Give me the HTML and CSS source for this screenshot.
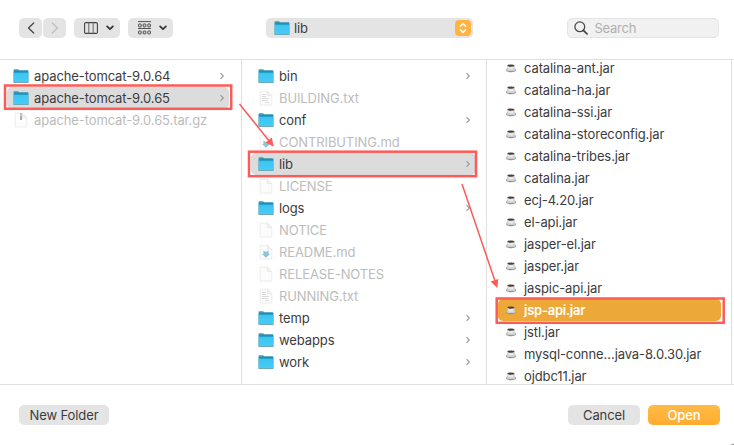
FILE: index.html
```html
<!DOCTYPE html>
<html lang="en">
<head>
<meta charset="utf-8">
<title>Open</title>
<link rel="stylesheet" href="styles.css">
</head>
<body>
<svg class="defs" aria-hidden="true">
  <defs>
    <linearGradient id="blue" x1="0" y1="0" x2="0" y2="1"><stop offset="0" stop-color="#3fc3ee"/><stop offset="1" stop-color="#43cdf9"/></linearGradient>
  </defs>
  <symbol id="folder" viewBox="0 0 16 16">
    <path d="M.5 2.2Q.5 1.2 1.5 1.2H5l1.3 1h8.2q1 0 1 1V14.5H.5z" fill="#4b98ae"/>
    <path d="M1 2.8H15V5.5H1z" fill="#1593c4"/>
    <path d="M.7 4.7H15.3V14.2H.7z" fill="url(#blue)"/>
    <path d="M.6 14.5H15.4" stroke="#6aa5b5" stroke-width=".9"/>
  </symbol>
  <symbol id="page" viewBox="0 0 16 16">
    <path d="M2.2 1.2H9.3L13.8 5.6V15H2.2z" fill="#fcfcfc" stroke="#e9e9e9" stroke-width=".8"/>
    <path d="M9.3 1.2V5.6H13.8z" fill="#f3f3f3" stroke="#e2e2e2" stroke-width=".7"/>
  </symbol>
  <symbol id="text" viewBox="0 0 16 16">
    <use href="#page"/>
    <path d="M4 4.5H8M4 6.5H8M4 8.5H11M4 10.5H10M7 12.5H11" stroke="#d2d2d2" stroke-width=".8"/>
  </symbol>
  <symbol id="markdown" viewBox="0 0 16 16">
    <use href="#page"/>
    <path d="M5.4 6.5 8 8l2.6-1.5V10H12l-4 3.7L4 10h1.4z" fill="#8ec5d5"/>
  </symbol>
  <symbol id="archive" viewBox="0 0 16 16">
    <use href="#page"/>
    <path d="M8 1V5" stroke="#aaa" stroke-width="1.4"/><path d="M7.1 4.5H9V8H7.1z" fill="#a3a3a3"/>
  </symbol>
  <symbol id="cup" viewBox="0 0 12 12">
    <ellipse cx="6" cy="8.1" rx="5" ry="2.1" fill="#8f9496"/>
    <ellipse cx="6" cy="7.5" rx="4.6" ry="1.6" fill="#d3d6d7"/>
    <path d="M2.4 3.5H9.5Q9.5 7.8 7.5 8.1H4.3Q2.4 7.6 2.4 3.5z" fill="#e8eaea" stroke="#aaa" stroke-width=".4"/>
    <ellipse cx="5.9" cy="3.6" rx="3.5" ry="1.2" fill="#4f3d36"/>
  </symbol>
  <symbol id="next" viewBox="0 0 6 8"><path d="M1.5 1.2 4.3 4 1.5 6.8" fill="none" stroke="#989898" stroke-width="1.1"/></symbol>
  <symbol id="down" viewBox="0 0 8 6"><path d="M1.1 1.3 4 4.2 6.9 1.3" fill="none" stroke="#333" stroke-width="1.7" stroke-linecap="round" stroke-linejoin="round"/></symbol>
</svg>

<main class="dialog">
  <header class="toolbar">
    <button class="nav" aria-label="Back"><svg width="8" height="12" viewBox="0 0 8 12"><path d="M6.7 1 1.5 6l5.2 5" fill="none" stroke="#444" stroke-width="1.25" stroke-linecap="round" stroke-linejoin="round"/></svg></button>
    <button class="nav nav-forward" aria-label="Forward"><svg width="8" height="12" viewBox="0 0 8 12"><path d="M1.3 1 6.5 6l-5.2 5" fill="none" stroke="#bdbdbd" stroke-width="1.2" stroke-linecap="round" stroke-linejoin="round"/></svg></button>
    <button class="view" aria-label="Columns">
      <svg width="14" height="12" viewBox="0 0 14 12"><rect x=".6" y=".6" width="12.8" height="10.8" rx="1.4" fill="none" stroke="#444" stroke-width="1.1"/><path d="M4.8.6V11.4M9.2.6V11.4" stroke="#666" stroke-width="1"/></svg>
      <svg class="down" width="8" height="6"><use href="#down"/></svg>
    </button>
    <button class="view group" aria-label="Group">
      <svg width="13" height="14" viewBox="0 0 13 14"><path d="M0 .6H13M0 7.5H13" stroke="#555" stroke-width="1"/><g fill="none" stroke="#444" stroke-width="1"><rect x=".6" y="3" width="2.6" height="2.9" rx=".6"/><rect x="5.2" y="3" width="2.6" height="2.9" rx=".6"/><rect x="9.8" y="3" width="2.6" height="2.9" rx=".6"/><rect x=".6" y="10" width="2.6" height="2.9" rx=".6"/><rect x="5.2" y="10" width="2.6" height="2.9" rx=".6"/><rect x="9.8" y="10" width="2.6" height="2.9" rx=".6"/></g></svg>
      <svg class="down" width="8" height="6"><use href="#down"/></svg>
    </button>
    <div class="location">
      <svg width="16" height="16"><use href="#folder"/></svg><span>lib</span>
      <i class="stepper"><svg width="16" height="16" viewBox="0 0 16 16"><path d="M5.3 6.2 8 3.6l2.7 2.6M5.3 9.8 8 12.4l2.7-2.6" fill="none" stroke="#fff" stroke-width="1.5" stroke-linecap="round" stroke-linejoin="round"/></svg></i>
    </div>
    <div class="search">
      <svg width="14" height="14" viewBox="0 0 14 14"><circle cx="5.8" cy="5.8" r="4.9" fill="none" stroke="#484848" stroke-width="1.3"/><path d="m9.4 9.4 3.7 3.6" stroke="#383838" stroke-width="1.6" stroke-linecap="round"/></svg><span>Search</span>
    </div>
  </header>

  <section class="browser">
    <ul class="column first">
      <li><svg class="icon"><use href="#folder"/></svg><span>apache-tomcat-9.0.64</span><svg class="next"><use href="#next"/></svg></li>
      <li class="selected"><svg class="icon"><use href="#folder"/></svg><span>apache-tomcat-9.0.65</span><svg class="next"><use href="#next"/></svg></li>
      <li class="dim"><svg class="icon"><use href="#archive"/></svg><span>apache-tomcat-9.0.65.tar.gz</span></li>
    </ul>
    <ul class="column second">
      <li><svg class="icon"><use href="#folder"/></svg><span>bin</span><svg class="next"><use href="#next"/></svg></li>
      <li class="dim"><svg class="icon"><use href="#text"/></svg><span>BUILDING.txt</span></li>
      <li><svg class="icon"><use href="#folder"/></svg><span>conf</span><svg class="next"><use href="#next"/></svg></li>
      <li class="dim"><svg class="icon"><use href="#markdown"/></svg><span>CONTRIBUTING.md</span></li>
      <li class="selected"><svg class="icon"><use href="#folder"/></svg><span>lib</span><svg class="next"><use href="#next"/></svg></li>
      <li class="dim"><svg class="icon"><use href="#page"/></svg><span>LICENSE</span></li>
      <li><svg class="icon"><use href="#folder"/></svg><span>logs</span><svg class="next"><use href="#next"/></svg></li>
      <li class="dim"><svg class="icon"><use href="#page"/></svg><span>NOTICE</span></li>
      <li class="dim"><svg class="icon"><use href="#markdown"/></svg><span>README.md</span></li>
      <li class="dim"><svg class="icon"><use href="#page"/></svg><span>RELEASE-NOTES</span></li>
      <li class="dim"><svg class="icon"><use href="#text"/></svg><span>RUNNING.txt</span></li>
      <li><svg class="icon"><use href="#folder"/></svg><span>temp</span><svg class="next"><use href="#next"/></svg></li>
      <li><svg class="icon"><use href="#folder"/></svg><span>webapps</span><svg class="next"><use href="#next"/></svg></li>
      <li><svg class="icon"><use href="#folder"/></svg><span>work</span><svg class="next"><use href="#next"/></svg></li>
    </ul>
    <ul class="column third">
      <li><svg class="cup"><use href="#cup"/></svg><span>catalina-ant.jar</span></li>
      <li><svg class="cup"><use href="#cup"/></svg><span>catalina-ha.jar</span></li>
      <li><svg class="cup"><use href="#cup"/></svg><span>catalina-ssi.jar</span></li>
      <li><svg class="cup"><use href="#cup"/></svg><span>catalina-storeconfig.jar</span></li>
      <li><svg class="cup"><use href="#cup"/></svg><span>catalina-tribes.jar</span></li>
      <li><svg class="cup"><use href="#cup"/></svg><span>catalina.jar</span></li>
      <li><svg class="cup"><use href="#cup"/></svg><span>ecj-4.20.jar</span></li>
      <li><svg class="cup"><use href="#cup"/></svg><span>el-api.jar</span></li>
      <li><svg class="cup"><use href="#cup"/></svg><span>jasper-el.jar</span></li>
      <li><svg class="cup"><use href="#cup"/></svg><span>jasper.jar</span></li>
      <li><svg class="cup"><use href="#cup"/></svg><span>jaspic-api.jar</span></li>
      <li class="chosen"><svg class="cup"><use href="#cup"/></svg><span>jsp-api.jar</span></li>
      <li><svg class="cup"><use href="#cup"/></svg><span>jstl.jar</span></li>
      <li><svg class="cup"><use href="#cup"/></svg><span>mysql-conne…java-8.0.30.jar</span></li>
      <li><svg class="cup"><use href="#cup"/></svg><span>ojdbc11.jar</span></li>
    </ul>
  </section>

  <footer class="actions">
    <button class="push new-folder">New Folder</button>
    <button class="push cancel">Cancel</button>
    <button class="push open">Open</button>
  </footer>

  <svg class="marks" viewBox="0 0 734 445" aria-hidden="true">
    <g fill="none" stroke="#fc5b57" stroke-width="2.5">
      <rect x="5" y="85.5" width="226.2" height="23.3"/>
      <rect x="249" y="151.7" width="227" height="24.5"/>
      <rect x="496.7" y="298.5" width="227" height="24.3"/>
    </g>
    <g fill="none" stroke="#fc5b57" stroke-width="1.5"><path d="M239.5 104 270 142M462 184 495 281"/></g>
    <path d="M273.8 146.8 265.8 142.5 271.8 137.6zM497.3 288 490.6 281.6 498.3 279z" fill="#fc5b57"/>
    <path d="M730 445 734 443.6V445z" fill="#999"/>
  </svg>
</main>
</body>
</html>
```

FILE: styles.css
```css
* { box-sizing: border-box; }
body { margin: 0; background: #fff; color: #3c3c3c; font: 13px/22px Inter, "Liberation Sans", sans-serif; letter-spacing: -.1px; }
button { border: 0; margin: 0; padding: 0; font: inherit; color: inherit; letter-spacing: inherit; }
svg { display: block; flex: none; }
.defs { position: absolute; width: 0; height: 0; }
.dialog { position: relative; width: 734px; height: 445px; overflow: hidden; display: flex; flex-direction: column; }

.toolbar { height: 59px; padding: 18px 15px 0 19px; display: flex; }
.nav, .view, .location, .search { height: 20px; border-radius: 5px; background: #e4e4e4; display: flex; align-items: center; }
.nav { width: 23px; justify-content: center; }
.nav-forward { margin-left: 1px; }
.view { width: 46px; margin-left: 8px; padding-left: 10px; }
.view .down { margin-left: 8px; }
.group { width: 45px; }
.location { width: 207px; margin-left: 93px; padding: 0 2px 0 8px; }
.location span { margin-left: 4px; }
.stepper { margin-left: auto; width: 16px; height: 16px; border-radius: 4px; background: #ffb440; }
.search { width: 152px; margin-left: 94px; padding-left: 6px; background: #f1f1f1; border: 1px solid #e4e4e4; color: #b0b0b0; letter-spacing: -.25px; }
.search span { margin-left: 6.5px; }

.browser { height: 326px; border: solid #dfdfdf; border-width: 1px 0; display: flex; overflow: hidden; }
.column { list-style: none; margin: 0; padding: 5px 10px 0 9px; border-right: 1px solid #dfdfdf; flex: none; }
.first { width: 242px; padding-left: 7px; padding-right: 12px; }
.second, .third { width: 245px; }
.third { margin-top: -3px; padding-top: 0; padding-left: 11px; }
.third li { padding-left: 7px; }
.column li { height: 22px; display: flex; align-items: center; border-radius: 5px; white-space: nowrap; }
.first li { padding-left: 6px; }
.second li { padding-left: 7px; }
.icon { width: 16px; height: 16px; }
.icon + span { margin-left: 5px; }
.cup { width: 12px; height: 12px; }
.cup + span { margin-left: 7px; }
.next { width: 6px; height: 8px; margin: 0 5px 0 auto; }
.first .next { margin-right: 4px; }
.dim { color: #bcbcbc; }
.selected { background: #dcdcdc; }
.chosen { background: #eca938; color: #fff; font-weight: 600; letter-spacing: -.25px; }

.actions { display: flex; padding: 20px 14px 0 19px; }
.push { height: 20px; line-height: 20px; border-radius: 5px; background: #e4e4e4; }
.new-folder { width: 90px; margin-right: auto; }
.cancel { width: 72px; }
.open { width: 72px; margin-left: 8px; background: linear-gradient(#ffbb48, #ffac2e); color: #fff; font-weight: 500; }

.marks { position: absolute; inset: 0; width: 734px; height: 445px; pointer-events: none; }
```
